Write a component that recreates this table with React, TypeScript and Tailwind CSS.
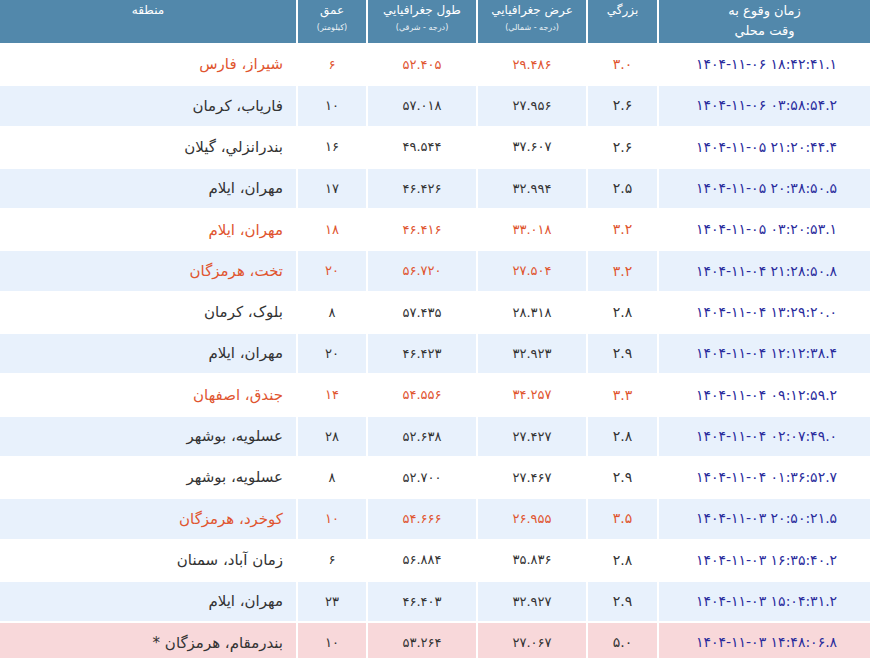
import React from 'react';

type Quake = {
    time: string;
    mag: string;
    lat: string;
    lon: string;
    depth: string;
    region: string;
    tone: 'normal' | 'red' | 'pink';
};

const FA = '۰۱۲۳۴۵۶۷۸۹';
const fa = (s: string) => s.replace(/\d/g, (d) => FA[Number(d)]);

const quakes: Quake[] = [
    { time: '1404-11-06 18:42:41.1', mag: '3.0', lat: '29.486', lon: '52.405', depth: '6', region: 'شيراز، فارس', tone: 'red' },
    { time: '1404-11-06 03:58:54.2', mag: '2.6', lat: '27.956', lon: '57.018', depth: '10', region: 'فارياب، كرمان', tone: 'normal' },
    { time: '1404-11-05 21:20:44.4', mag: '2.6', lat: '37.607', lon: '49.544', depth: '16', region: 'بندرانزلي، گيلان', tone: 'normal' },
    { time: '1404-11-05 20:38:50.5', mag: '2.5', lat: '32.994', lon: '46.426', depth: '17', region: 'مهران، ايلام', tone: 'normal' },
    { time: '1404-11-05 03:20:53.1', mag: '3.2', lat: '33.018', lon: '46.416', depth: '18', region: 'مهران، ايلام', tone: 'red' },
    { time: '1404-11-04 21:28:50.8', mag: '3.2', lat: '27.504', lon: '56.720', depth: '20', region: 'تخت، هرمزگان', tone: 'red' },
    { time: '1404-11-04 13:29:20.0', mag: '2.8', lat: '28.318', lon: '57.435', depth: '8', region: 'بلوک، کرمان', tone: 'normal' },
    { time: '1404-11-04 12:12:38.4', mag: '2.9', lat: '32.923', lon: '46.423', depth: '20', region: 'مهران، ايلام', tone: 'normal' },
    { time: '1404-11-04 09:12:59.2', mag: '3.3', lat: '34.257', lon: '54.556', depth: '14', region: 'جندق، اصفهان', tone: 'red' },
    { time: '1404-11-04 02:07:49.0', mag: '2.8', lat: '27.427', lon: '52.638', depth: '28', region: 'عسلويه، بوشهر', tone: 'normal' },
    { time: '1404-11-04 01:36:52.7', mag: '2.9', lat: '27.467', lon: '52.700', depth: '8', region: 'عسلويه، بوشهر', tone: 'normal' },
    { time: '1404-11-03 20:50:21.5', mag: '3.5', lat: '26.955', lon: '54.666', depth: '10', region: 'كوخرد، هرمزگان', tone: 'red' },
    { time: '1404-11-03 16:35:40.2', mag: '2.8', lat: '35.836', lon: '56.884', depth: '6', region: 'زمان آباد، سمنان', tone: 'normal' },
    { time: '1404-11-03 15:04:31.2', mag: '2.9', lat: '32.927', lon: '46.403', depth: '23', region: 'مهران، ايلام', tone: 'normal' },
    { time: '1404-11-03 14:48:06.8', mag: '5.0', lat: '27.067', lon: '53.264', depth: '10', region: 'بندرمقام، هرمزگان *', tone: 'pink' },
];

function HeadCell({ title, sub }: { title: string; sub?: string }) {
    return (
        <div className="bg-[#5288ab] text-white flex flex-col items-center pt-[1px]">
            <span className="text-[12px] leading-[18px]">{title}</span>
            {sub && <span className="text-[8px] leading-[18px] opacity-90">{sub}</span>}
        </div>
    );
}

export default function App() {
    return (
        <div
            dir="rtl"
            className="w-[870px] h-[658px] overflow-hidden bg-white"
            style={{ fontFamily: '"DejaVu Sans", "Noto Sans", sans-serif' }}
        >
            <div className="grid grid-cols-[211px_69px_108px_108px_68px_1fr] grid-rows-[43px] auto-rows-[39.3px] gap-[2px] bg-white">
                {/* header */}
                <div className="bg-[#5288ab] text-white flex flex-col items-center pt-[1px]">
                    <span className="text-[13px] leading-[20px]">زمان وقوع به</span>
                    <span className="text-[13px] leading-[20px]">وقت محلي</span>
                </div>
                <HeadCell title="بزرگي" />
                <HeadCell title="عرض جغرافيايي" sub="(درجه - شمالي)" />
                <HeadCell title="طول جغرافيايي" sub="(درجه - شرقي)" />
                <HeadCell title="عمق" sub="(كيلومتر)" />
                <HeadCell title="منطقه" />

                {quakes.map((q, i) => {
                    const bg =
                        q.tone === 'pink' ? 'bg-[#f8d8da]' : i % 2 === 1 ? 'bg-[#e8f1fc]' : 'bg-white';
                    const txt = q.tone === 'red' ? 'text-[#e0552f]' : 'text-[#333333]';
                    return (
                        <React.Fragment key={i}>
                            <div className={`${bg} flex items-center justify-center pl-[4px]`}>
                                <span dir="ltr" className="text-[14px] text-[#2a2c9c] tracking-[0.5px]">
                                    {fa(q.time)}
                                </span>
                            </div>
                            <div className={`${bg} ${txt} flex items-center justify-center text-[14px]`}>
                                {fa(q.mag)}
                            </div>
                            <div className={`${bg} ${txt} flex items-center justify-center text-[13px]`}>
                                {fa(q.lat)}
                            </div>
                            <div className={`${bg} ${txt} flex items-center justify-center text-[13px]`}>
                                {fa(q.lon)}
                            </div>
                            <div className={`${bg} ${txt} flex items-center justify-center text-[13px]`}>
                                {fa(q.depth)}
                            </div>
                            <div className={`${bg} ${txt} flex items-center justify-start pr-[13px] text-[15px]`}>
                                {q.region}
                            </div>
                        </React.Fragment>
                    );
                })}
            </div>
        </div>
    );
}
